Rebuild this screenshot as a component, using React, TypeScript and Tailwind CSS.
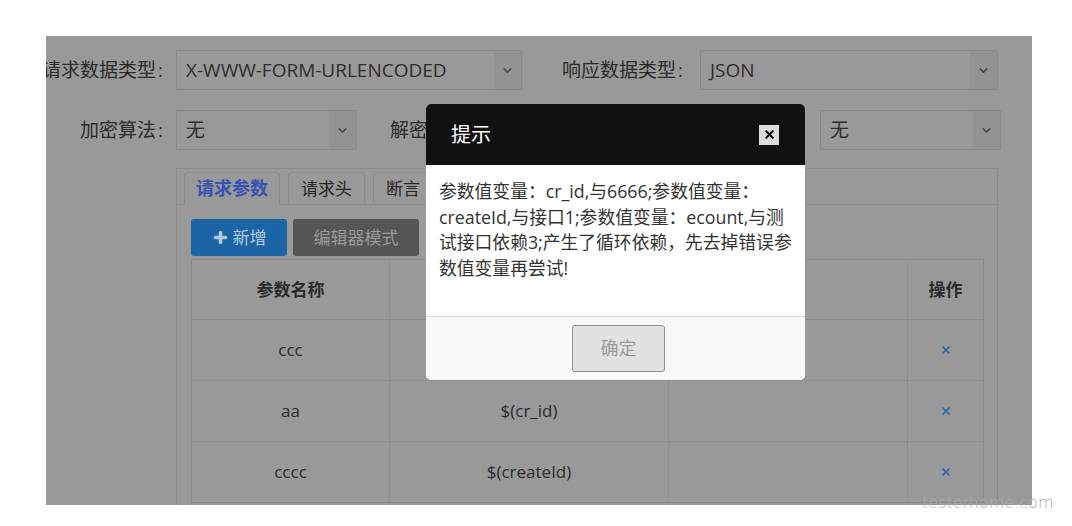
import { ChevronDown, Plus, X } from "lucide-react";

const FONT = "font-['Open_Sans','Noto_Sans_CJK_SC',sans-serif]";

const ROWS = [
    { name: "ccc", value: "" },
    { name: "aa", value: "$(cr_id)" },
    { name: "cccc", value: "$(createId)" },
];

function Select({ value, width }: { value: string; width: string }) {
    return (
        <div className={`${width} h-[40px] flex items-stretch border border-[#8a8a8a] bg-[#999999] shrink-0`}>
            <div className="flex-1 flex items-center pl-[9px] text-[19px] text-[#2e2e2e]">{value}</div>
            <div className="w-[27px] flex items-center justify-center bg-[#939393]">
                <ChevronDown className="w-[13px] h-[13px] text-[#4a4a4a]" strokeWidth={3} />
            </div>
        </div>
    );
}

function Label({ text, width }: { text: string; width?: string }) {
    return (
        <div className={`${width ?? ""} flex justify-end shrink-0`}>
            <span className="whitespace-nowrap shrink-0 text-[19px] text-[#2b2b2b]">
                {text}
                <span className="ml-[2px] mr-[2px]">:</span>
            </span>
        </div>
    );
}

export default function App() {
    return (
        <div className={`w-[1072px] h-[526px] bg-white pt-[36px] pl-[46px] ${FONT}`}>
            <div className="w-[986px] h-[469px] bg-[#999999] relative overflow-hidden">
                {/* form rows */}
                <div className="flex items-center pt-[14px]">
                    <Label text="请求数据类型" width="w-[119px]" />
                    <div className="ml-[11px]">
                        <Select value="X-WWW-FORM-URLENCODED" width="w-[346px]" />
                    </div>
                    <div className="ml-[33px]">
                        <Label text="响应数据类型" width="w-[130px]" />
                    </div>
                    <div className="ml-[15px]">
                        <Select value="JSON" width="w-[298px]" />
                    </div>
                </div>
                <div className="flex items-center pt-[20px] pr-[31px]">
                    <Label text="加密算法" width="w-[119px]" />
                    <div className="ml-[11px]">
                        <Select value="无" width="w-[181px]" />
                    </div>
                    <div className="ml-[33px]">
                        <Label text="解密算法" />
                    </div>
                    <div className="ml-auto">
                        <Select value="无" width="w-[181px]" />
                    </div>
                </div>

                {/* tabs panel */}
                <div className="ml-[130px] mt-[18px] w-[822px] h-[400px] border border-[#8c8c8c]">
                    <div className="h-[36px] flex items-end gap-[8px] px-[7px] border-b border-[#8c8c8c]">
                        <div className="h-[33px] w-[96px] -mb-px flex items-center justify-center border border-[#8c8c8c] border-b-[#999999] rounded-t-[4px] text-[18px] font-bold text-[#3552b4]">
                            请求参数
                        </div>
                        <div className="h-[32px] w-[77px] flex items-center justify-center border border-b-0 border-[#8c8c8c] rounded-t-[4px] text-[17px] text-[#262626]">
                            请求头
                        </div>
                        <div className="h-[32px] w-[60px] flex items-center justify-center border border-b-0 border-[#8c8c8c] rounded-t-[4px] text-[17px] text-[#262626]">
                            断言
                        </div>
                    </div>
                    <div className="px-[14px] pt-[14px]">
                        <div className="flex gap-[6px]">
                            <button className="w-[96px] h-[37px] rounded-[3px] bg-[#1b65a6] flex items-center justify-center gap-[4px] text-[17px] text-[#b5c9dc]">
                                <Plus className="w-[17px] h-[17px]" strokeWidth={5} />
                                新增
                            </button>
                            <button className="w-[126px] h-[37px] rounded-[3px] bg-[#555555] flex items-center justify-center text-[17px] text-[#9a9a9a]">
                                编辑器模式
                            </button>
                        </div>
                        <table className="mt-[3px] w-[793px] border border-[#8a8a8a] border-collapse text-[17px] text-[#2b2b2b]">
                            <thead>
                                <tr className="h-[60px] border-b border-[#8a8a8a]">
                                    <th className="w-[198px] border-r border-dotted border-r-[#8a8a8a] font-bold">参数名称</th>
                                    <th className="w-[279px] border-r border-dotted border-r-[#8a8a8a]"></th>
                                    <th className="w-[239px] border-r border-dotted border-r-[#8a8a8a]"></th>
                                    <th className="w-[76px] font-bold">操作</th>
                                </tr>
                            </thead>
                            <tbody>
                                {ROWS.map((r) => (
                                    <tr key={r.name} className="h-[61px] border-b border-dotted border-b-[#8a8a8a]">
                                        <td className="text-center border-r border-dotted border-r-[#8a8a8a]">{r.name}</td>
                                        <td className="text-center border-r border-dotted border-r-[#8a8a8a]">{r.value}</td>
                                        <td className="border-r border-dotted border-r-[#8a8a8a]"></td>
                                        <td>
                                            <div className="flex justify-center">
                                                <X className="w-[12px] h-[12px] text-[#2a6aa8]" strokeWidth={3.5} />
                                            </div>
                                        </td>
                                    </tr>
                                ))}
                            </tbody>
                        </table>
                    </div>
                </div>

                {/* modal */}
                <div className="absolute left-[380px] top-[68px] w-[379px] h-[276px] rounded-[5px] bg-white flex flex-col overflow-hidden">
                    <div className="h-[61px] bg-[#111111] flex items-center justify-between pl-[25px] pr-[26px]">
                        <span className="text-[20px] text-white">提示</span>
                        <div className="w-[20px] h-[20px] bg-[#dddddd] flex items-center justify-center">
                            <X className="w-[13px] h-[13px] text-[#111111]" strokeWidth={4} />
                        </div>
                    </div>
                    <div className="flex-1 pl-[13px] pt-[14px] text-[17.8px] leading-[25.5px] text-[#333333] whitespace-nowrap">
                        参数值变量：cr_id,与6666;参数值变量：<br />
                        createId,与接口1;参数值变量：ecount,与测<br />
                        试接口依赖3;产生了循环依赖，先去掉错误参<br />
                        数值变量再尝试!
                    </div>
                    <div className="h-[64px] bg-[#f8f8f8] border-t border-[#dddddd] flex items-center justify-center pl-[6px]">
                        <button className="w-[93px] h-[47px] bg-[#e2e2e2] border border-[#8f8f8f] rounded-[3px] text-[18px] text-[#9a9a9a]">
                            确定
                        </button>
                    </div>
                </div>
            </div>

            {/* watermark */}
            <div className="absolute left-[922px] top-[491px] text-[16px] font-light text-[#a9a9a9] font-['DejaVu_Sans',sans-serif]">
                testerhome.com
            </div>
        </div>
    );
}
